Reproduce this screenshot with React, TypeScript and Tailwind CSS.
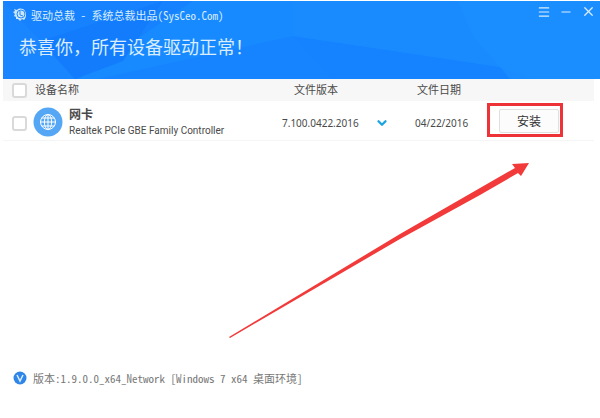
import { Menu, Minus, X, ChevronDown } from "lucide-react";

const devices = [
  {
    id: "network",
    type: "网卡",
    name: "Realtek PCIe GBE Family Controller",
    version: "7.100.0422.2016",
    date: "04/22/2016",
  },
];

const checkboxStyle =
  "block size-[15px] appearance-none rounded-[3px] border-2 border-[#d9d9d9] bg-white checked:bg-[#1a88ff]";

function HeaderPattern() {
  return (
    <svg
      className="absolute inset-0 size-full"
      viewBox="0 0 597 78"
      preserveAspectRatio="none"
      aria-hidden="true"
    >
      <path d="M0 0H190L75 78H0Z" fill="#1682ff" />
      <path d="M0 0L38 40L72 78H0Z" fill="#1985fe" />
      <path d="M38 40L160 0L120 60L72 78Z" fill="#127cfd" />
      <path d="M95 78L290 35L390 67L395 78Z" fill="#1684ff" />
      <path d="M290 35L497 66L507 78H330Z" fill="#1582ff" />
      <path d="M290 0H475L497 66L290 35Z" fill="#1a8bff" />
      <path d="M475 0H527L550 78H507L497 66Z" fill="#1a8cff" />
      <path d="M455 0L470 35L497 66L527 78H597V0Z" fill="#1b8eff" />
    </svg>
  );
}

function AppLogo() {
  return (
    <svg className="size-[14px]" viewBox="0 0 14 14" fill="none" aria-hidden="true">
      <path
        d="M1 1L4 2C6 0 10 0 12 3C14 6 13 10 11 12L9 11L7 13L5 11L3 11L3 9L1 8L2 6L0 4L2 3Z"
        fill="#c9e6ff"
      />
      <circle cx="8" cy="6" r="4" stroke="#2b8cf5" />
      <path d="M7 3V7L10 8" stroke="#2b8cf5" />
    </svg>
  );
}

function NetworkIcon() {
  return (
    <svg className="size-[30px] shrink-0" viewBox="0 0 30 30" fill="none" aria-hidden="true">
      <circle cx="15" cy="15" r="14.5" fill="#55a7f5" />
      <g stroke="#fff" strokeWidth="1">
        <circle cx="15" cy="15" r="7.5" />
        <ellipse cx="15" cy="15" rx="3.6" ry="7.5" />
        <path d="M15 7.5V22.5M7.5 15H22.5M8.8 11H21.2M8.8 19H21.2" />
      </g>
    </svg>
  );
}

function TitleBar() {
  return (
    <header className="relative h-[78px] overflow-hidden bg-[#188aff] text-[#d9edff]">
      <HeaderPattern />
      <div className="relative flex items-start justify-between pr-1">
        <div className="flex items-center gap-1 pt-1.5 pl-2.5">
          <AppLogo />
          <span className="font-['Noto_Sans_Mono_CJK_SC','Liberation_Mono','Noto_Sans_CJK_SC',monospace] text-[11px] leading-4 whitespace-pre">
            驱动总裁 - 系统总裁出品(SysCeo.Com)
          </span>
        </div>
        <div className="flex gap-2 pt-[3px]">
          <button type="button" aria-label="菜单">
            <Menu size={14} strokeWidth={2} />
          </button>
          <button type="button" aria-label="最小化">
            <Minus size={14} strokeWidth={2} />
          </button>
          <button type="button" aria-label="关闭">
            <X size={15} strokeWidth={2} />
          </button>
        </div>
      </div>
      <h1 className="relative pt-2.5 pl-4 text-lg leading-7 font-normal">
        恭喜你，所有设备驱动正常！
      </h1>
    </header>
  );
}

function DeviceTable() {
  return (
    <table className="w-full table-fixed border-collapse text-left text-[#4a4a4a]">
      <colgroup>
        <col className="w-[30px]" />
        <col />
        <col className="w-[133px]" />
        <col className="w-[72px]" />
        <col className="w-[107px]" />
      </colgroup>
      <thead className="bg-[#f7f7f7] text-[11px] leading-[22px]">
        <tr>
          <th className="pl-[9px]">
            <input type="checkbox" aria-label="全选" className={checkboxStyle} />
          </th>
          <th className="pl-0.5 font-normal">设备名称</th>
          <th className="pl-3 font-normal">文件版本</th>
          <th className="pl-0.5 font-normal">文件日期</th>
          <td />
        </tr>
      </thead>
      <tbody className="text-[10px]">
        {devices.map((device) => (
          <tr key={device.id} className="h-[39px] border-b border-[#f5f5f5]">
            <td className="pt-1.5 pl-[9px]">
              <input id={device.id} type="checkbox" className={checkboxStyle} />
            </td>
            <td className="pt-1">
              <label htmlFor={device.id} className="flex items-center gap-1.5">
                <NetworkIcon />
                <span className="flex flex-col whitespace-nowrap">
                  <span className="text-xs leading-[17px] font-bold">{device.type}</span>
                  <span className="font-[Roboto,sans-serif] leading-4">{device.name}</span>
                </span>
              </label>
            </td>
            <td>
              <div className="flex items-center gap-4 pt-1.5">
                {device.version}
                <button type="button" aria-label="选择版本" className="text-[#1ba5e0]">
                  <ChevronDown size={14} strokeWidth={4} />
                </button>
              </div>
            </td>
            <td className="pt-1.5">{device.date}</td>
            <td>
              <div className="w-[76px] border-3 border-[#ee3338] pt-[3px] pr-px pb-px pl-[9px]">
                <button
                  type="button"
                  className="block h-6 w-full rounded-xs border border-[#e0e0e0] bg-[#fcfcfc] pt-0.5 text-xs text-[#333]"
                >
                  安装
                </button>
              </div>
            </td>
          </tr>
        ))}
      </tbody>
    </table>
  );
}

function PointerArrow() {
  return (
    <svg className="h-[175px] w-[301px]" viewBox="0 0 301 175" aria-hidden="true">
      <path
        d="M0 174L171 71L251 25L286 5L283 1L300 0L292 13L289 10L251 32L171 76L1 175Z"
        fill="#f23a3a"
      />
    </svg>
  );
}

export default function App() {
  return (
    <div className="min-h-screen bg-white pt-px pl-[3px] font-['Noto_Sans','Noto_Sans_CJK_SC',sans-serif]">
      <TitleBar />
      <main className="pr-1.5">
        <DeviceTable />
        <div className="flex justify-end pt-[22px] pr-16">
          <PointerArrow />
        </div>
      </main>
      <footer className="flex items-center gap-1.5 pt-8 pl-2.5 text-[#777]">
        <svg className="size-[14px]" viewBox="0 0 14 14" fill="none" aria-hidden="true">
          <circle cx="7" cy="7" r="6.5" fill="#2f86e8" />
          <path d="M4 4L7 10L10 4" stroke="#d9edff" strokeWidth="1.5" />
        </svg>
        <span className="font-['Noto_Sans_Mono_CJK_SC','Liberation_Mono','Noto_Sans_CJK_SC',monospace] text-[11px] leading-4">
          版本:1.9.0.0_x64_Network [Windows 7 x64 桌面环境]
        </span>
      </footer>
    </div>
  );
}
